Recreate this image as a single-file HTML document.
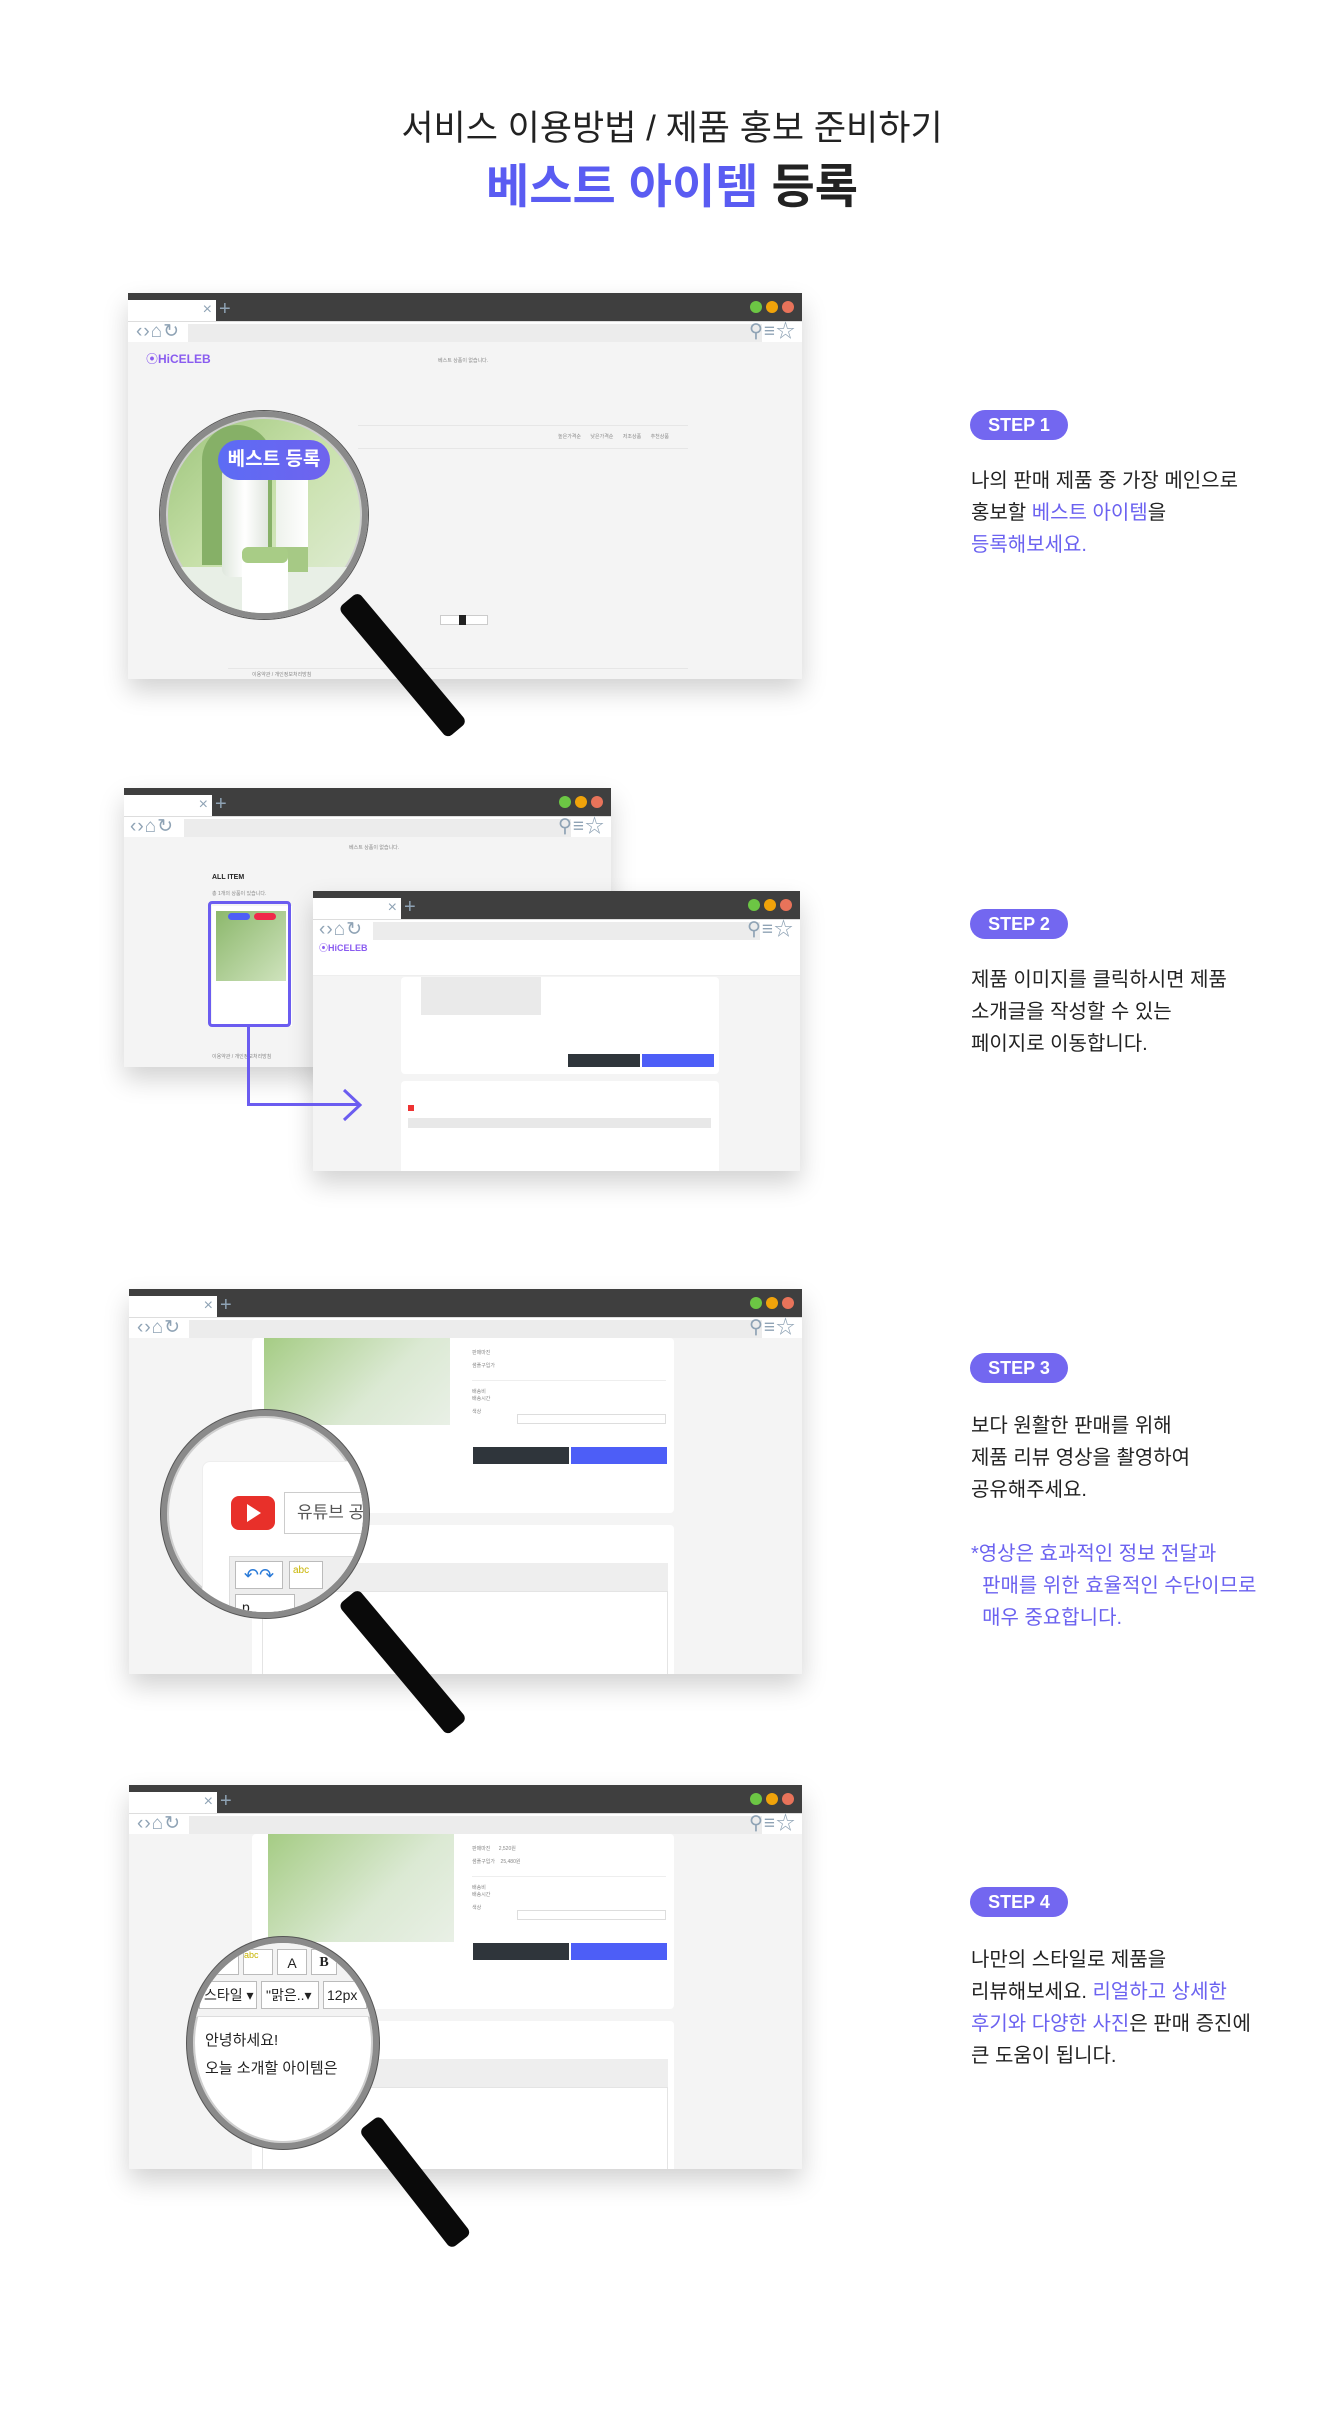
<!DOCTYPE html>
<html><head><meta charset="utf-8"><style>
*{margin:0;padding:0;box-sizing:border-box}
body{width:1344px;height:2418px;background:#fff;position:relative;overflow:hidden;font-family:"Liberation Sans","Noto Sans CJK KR",sans-serif;color:#222}
.a{position:absolute}
.br{position:absolute;background:#f4f4f4;box-shadow:0 12px 24px rgba(0,0,0,.18);overflow:hidden}
.top{position:absolute;left:0;right:0;top:0;height:28px;background:#3f3f3f}
.tab{position:absolute;left:0;top:7px;width:88px;height:21px;background:#fff}
.tab i{position:absolute;right:4px;top:1px;font-style:normal;color:#8fa3b5;font-size:16px}
.plus{position:absolute;left:91px;top:6px;color:#8fa3b5;font-size:20px;line-height:20px}
.dots{position:absolute;right:8px;top:8px;display:flex;gap:4px}
.dots b{width:12px;height:12px;border-radius:50%}
.nav{position:absolute;left:0;right:0;top:28px;height:21px;background:#fff;border-top:1px solid #ddd}
.addr{position:absolute;left:60px;right:40px;top:2px;height:18px;background:#ececec}
.ic{position:absolute;top:-1px;color:#8fa3b5;font-size:19px;line-height:22px;letter-spacing:1px}
.step{position:absolute;left:970px;width:98px;height:30px;border-radius:15px;background:#7367f0;color:#fff;font-weight:bold;font-size:18px;text-align:center;line-height:30px}
.tx{position:absolute;left:971px;font-size:20px;line-height:32px;color:#222}
.p{color:#6b62f0}
.mag{position:absolute;border-radius:50%;border:6px solid #8a8a8a;box-shadow:0 0 0 2px #cfcfcf inset,0 0 0 1px #555;overflow:hidden}
.handle{position:absolute;background:#0a0a0a;border-radius:6px;transform-origin:top center}
.sm{font-size:5px;color:#888}
.panel{position:absolute;background:#fff;border-radius:4px}
.btnd{position:absolute;background:#2f353b;color:#fff;font-size:6px;text-align:center}
.btnb{position:absolute;background:#4d5ef7;color:#fff;font-size:6px;text-align:center}
</style></head><body>

<div class="a" style="left:0;width:1344px;top:100px;text-align:center;font-size:35px;color:#222">서비스 이용방법 / 제품 홍보 준비하기</div>
<div class="a" style="left:0;width:1344px;top:148px;text-align:center;font-size:47px;font-weight:bold;color:#222"><span style="color:#5a5cf2">베스트 아이템</span> 등록</div>

<!-- STEP1 browser -->
<div class="br" style="left:128px;top:293px;width:674px;height:386px">
 <div class="top"><div class="tab"><i>×</i></div><div class="plus">+</div><div class="dots"><b style="background:#6cc644"></b><b style="background:#f0a30a"></b><b style="background:#e8735a"></b></div></div>
 <div class="nav"><div class="ic" style="left:8px">‹›⌂↻</div><div class="addr"></div><div class="ic" style="right:6px">⚲≡☆</div></div>
 <div class="a" style="left:18px;top:57px;font-size:12px;font-weight:bold;color:#8a5cf0">⦿HiCELEB</div>
 <div class="a sm" style="left:310px;top:64px">베스트 상품이 없습니다.</div>
 <div class="a" style="left:230px;top:132px;width:330px;height:1px;background:#e6e6e6"></div>
 <div class="a sm" style="left:430px;top:140px;word-spacing:8px">높은가격순 낮은가격순 저조상품 추천상품</div>
 <div class="a" style="left:230px;top:155px;width:330px;height:1px;background:#e6e6e6"></div>
 <div class="a" style="left:312px;top:322px;width:48px;height:10px;border:1px solid #ccc;background:#fff"></div>
 <div class="a" style="left:331px;top:322px;width:7px;height:10px;background:#222"></div>
 <div class="a" style="left:100px;top:375px;width:460px;height:1px;background:#e6e6e6"></div>
 <div class="a sm" style="left:124px;top:378px">이용약관 / 개인정보처리방침</div>
</div>
<div class="handle" style="left:335px;top:600px;width:26px;height:170px;transform:rotate(-40deg)"></div>
<div class="mag" style="left:160px;top:411px;width:208px;height:208px;background:linear-gradient(135deg,#9cc47a,#c7e0a9 45%,#e4eedc)">
 <div class="a" style="left:36px;top:8px;width:70px;height:140px;background:#86b067;border-radius:35px 35px 0 0"></div>
 <div class="a" style="left:0;top:150px;width:208px;height:60px;background:#e8efe6"></div>
 <div class="a" style="left:56px;top:50px;width:46px;height:110px;background:linear-gradient(90deg,#dfe7dd,#fff,#e0e6de);border-radius:8px"></div>
 <div class="a" style="left:110px;top:55px;width:32px;height:100px;background:linear-gradient(90deg,#eef2ec,#fff);border-radius:4px"></div>
 <div class="a" style="left:110px;top:130px;width:32px;height:25px;background:#a6c985"></div>
 <div class="a" style="left:76px;top:138px;width:46px;height:60px;background:#fff;border-radius:4px"></div>
 <div class="a" style="left:76px;top:130px;width:46px;height:16px;background:#a8cc86;border-radius:6px"></div>
 <div class="a" style="left:52px;top:23px;width:112px;height:40px;border-radius:20px;background:linear-gradient(90deg,#5c6cf5,#6f63ee);color:#fff;font-weight:bold;font-size:19px;text-align:center;line-height:40px">베스트 등록</div>
</div>
<div class="step" style="top:410px">STEP 1</div>
<div class="tx" style="top:465px">나의 판매 제품 중 가장 메인으로<br>홍보할 <span class="p">베스트 아이템</span>을<br><span class="p">등록해보세요.</span></div>

<!-- STEP2 -->
<div class="br" style="left:124px;top:788px;width:487px;height:279px">
 <div class="top"><div class="tab"><i>×</i></div><div class="plus">+</div><div class="dots"><b style="background:#6cc644"></b><b style="background:#f0a30a"></b><b style="background:#e8735a"></b></div></div>
 <div class="nav"><div class="ic" style="left:6px">‹›⌂↻</div><div class="addr"></div><div class="ic" style="right:6px">⚲≡☆</div></div>
 <div class="a sm" style="left:225px;top:56px">베스트 상품이 없습니다.</div>
 <div class="a" style="left:88px;top:86px;font-size:7px;font-weight:bold">ALL ITEM</div>
 <div class="a sm" style="left:88px;top:102px">총 1개의 상품이 있습니다.</div>
 <div class="a" style="left:88px;top:118px;width:80px;height:120px;background:#fff"></div>
 <div class="a" style="left:92px;top:123px;width:70px;height:70px;background:linear-gradient(135deg,#8cb86c,#cfe3bd)"></div>
 <div class="a" style="left:104px;top:125px;width:22px;height:7px;border-radius:4px;background:#4d5ef7"></div>
 <div class="a" style="left:130px;top:125px;width:22px;height:7px;border-radius:4px;background:#f0284a"></div>
 <div class="a sm" style="left:88px;top:265px">이용약관 / 개인정보처리방침</div>
</div>

<div class="br" style="left:313px;top:891px;width:487px;height:280px">
 <div class="top"><div class="tab"><i>×</i></div><div class="plus">+</div><div class="dots"><b style="background:#6cc644"></b><b style="background:#f0a30a"></b><b style="background:#e8735a"></b></div></div>
 <div class="nav"><div class="ic" style="left:6px">‹›⌂↻</div><div class="addr"></div><div class="ic" style="right:6px">⚲≡☆</div></div>
 <div class="a" style="left:0;right:0;top:49px;height:36px;background:#fff;border-bottom:1px solid #eee"></div>
 <div class="a" style="left:6px;top:50px;font-size:9px;font-weight:bold;color:#8a5cf0">⦿HiCELEB</div>
 <div class="panel" style="left:88px;top:86px;width:318px;height:97px"></div>
 <div class="a" style="left:108px;top:86px;width:120px;height:38px;background:#eaeaea"></div>
 <div class="btnd" style="left:255px;top:163px;width:72px;height:13px"></div>
 <div class="btnb" style="left:329px;top:163px;width:72px;height:13px"></div>
 <div class="panel" style="left:88px;top:190px;width:318px;height:100px"></div>
 <div class="a" style="left:95px;top:214px;width:6px;height:6px;background:#e33"></div>
 <div class="a" style="left:95px;top:227px;width:303px;height:10px;background:#e8e8e8"></div>
</div>
<div class="a" style="left:208px;top:901px;width:83px;height:126px;border:3px solid #6b5cf0;border-radius:4px"></div>
<div class="a" style="left:247px;top:1027px;width:3px;height:79px;background:#6b5cf0"></div>
<div class="a" style="left:247px;top:1103px;width:112px;height:3px;background:#6b5cf0"></div>
<svg class="a" style="left:340px;top:1088px" width="24" height="34"><path d="M4 2 L20 17 L4 32" fill="none" stroke="#6b5cf0" stroke-width="3"/></svg>
<div class="step" style="top:909px">STEP 2</div>
<div class="tx" style="top:964px">제품 이미지를 클릭하시면 제품<br>소개글을 작성할 수 있는<br>페이지로 이동합니다.</div>

<!-- STEP3 -->
<div class="br" style="left:129px;top:1289px;width:673px;height:385px">
 <div class="top"><div class="tab"><i>×</i></div><div class="plus">+</div><div class="dots"><b style="background:#6cc644"></b><b style="background:#f0a30a"></b><b style="background:#e8735a"></b></div></div>
 <div class="nav"><div class="ic" style="left:8px">‹›⌂↻</div><div class="addr"></div><div class="ic" style="right:6px">⚲≡☆</div></div>
 <div class="panel" style="left:123px;top:49px;width:422px;height:175px"></div>
 <div class="a" style="left:135px;top:49px;width:186px;height:87px;background:linear-gradient(135deg,#a5cc84,#dbe9d3 60%,#e9f0e6)"></div>
 <div class="a sm" style="left:343px;top:60px">판매마진<br><br>샘플구입가</div>
 <div class="a" style="left:343px;top:91px;width:194px;height:1px;background:#eee"></div>
 <div class="a sm" style="left:343px;top:99px">배송비<br>배송시간<br><br>색상</div>
 <div class="a" style="left:388px;top:125px;width:149px;height:10px;border:1px solid #ddd;background:#fff"></div>
 <div class="btnd" style="left:344px;top:158px;width:96px;height:17px"></div>
 <div class="btnb" style="left:442px;top:158px;width:96px;height:17px"></div>
 <div class="panel" style="left:123px;top:236px;width:422px;height:160px"></div>
 <div class="a" style="left:133px;top:274px;width:406px;height:28px;background:#eee"></div>
 <div class="a" style="left:133px;top:302px;width:406px;height:100px;background:#fff;border:1px solid #e4e4e4"></div>
</div>
<div class="handle" style="left:335px;top:1597px;width:26px;height:170px;transform:rotate(-40deg)"></div>
<div class="mag" style="left:161px;top:1410px;width:208px;height:208px;background:#f5f5f5">
 <div class="a" style="left:35px;top:45px;width:200px;height:200px;background:#fff;border-radius:8px;border:1px solid #eee"></div>
 <div class="a" style="left:64px;top:80px;width:44px;height:34px;background:#e8302a;border-radius:8px"></div>
 <div class="a" style="left:80px;top:88px;width:0;height:0;border-left:14px solid #fff;border-top:9px solid transparent;border-bottom:9px solid transparent"></div>
 <div class="a" style="left:117px;top:76px;width:100px;height:42px;border:1px solid #ccc;background:#fff;font-size:17px;color:#555;line-height:40px;padding-left:12px">유튜브 공유</div>
 <div class="a" style="left:62px;top:140px;width:160px;height:80px;background:#eee;border:1px solid #ddd"></div>
 <div class="a" style="left:68px;top:145px;width:48px;height:28px;border:1px solid #bbb;background:#fff;color:#2a7ad8;font-size:18px;line-height:26px;text-align:center">↶↷</div>
 <div class="a" style="left:122px;top:145px;width:34px;height:28px;border:1px solid #bbb;background:#fff;font-size:10px;color:#c8b400;padding:3px">abc</div>
 <div class="a" style="left:68px;top:178px;width:60px;height:28px;border:1px solid #bbb;background:#fff;font-size:14px;padding:4px 6px">p</div>
</div>
<div class="step" style="top:1353px">STEP 3</div>
<div class="tx" style="top:1410px">보다 원활한 판매를 위해<br>제품 리뷰 영상을 촬영하여<br>공유해주세요.</div>
<div class="tx p" style="top:1538px">*영상은 효과적인 정보 전달과<br>&nbsp;&nbsp;판매를 위한 효율적인 수단이므로<br>&nbsp;&nbsp;매우 중요합니다.</div>

<!-- STEP4 -->
<div class="br" style="left:129px;top:1785px;width:673px;height:384px">
 <div class="top"><div class="tab"><i>×</i></div><div class="plus">+</div><div class="dots"><b style="background:#6cc644"></b><b style="background:#f0a30a"></b><b style="background:#e8735a"></b></div></div>
 <div class="nav"><div class="ic" style="left:8px">‹›⌂↻</div><div class="addr"></div><div class="ic" style="right:6px">⚲≡☆</div></div>
 <div class="panel" style="left:123px;top:49px;width:422px;height:175px"></div>
 <div class="a" style="left:139px;top:49px;width:186px;height:108px;background:linear-gradient(135deg,#a5cc84,#dbe9d3 60%,#e9f0e6)"></div>
 <div class="a sm" style="left:343px;top:60px">판매마진 &nbsp;&nbsp;&nbsp;&nbsp; 2,520원<br><br>샘플구입가 &nbsp;&nbsp; 25,480원</div>
 <div class="a" style="left:343px;top:91px;width:194px;height:1px;background:#eee"></div>
 <div class="a sm" style="left:343px;top:99px">배송비<br>배송시간<br><br>색상</div>
 <div class="a" style="left:388px;top:125px;width:149px;height:10px;border:1px solid #ddd;background:#fff"></div>
 <div class="btnd" style="left:344px;top:158px;width:96px;height:17px"></div>
 <div class="btnb" style="left:442px;top:158px;width:96px;height:17px"></div>
 <div class="panel" style="left:123px;top:236px;width:422px;height:160px"></div>
 <div class="a" style="left:133px;top:274px;width:406px;height:28px;background:#eee"></div>
 <div class="a" style="left:133px;top:302px;width:406px;height:100px;background:#fff;border:1px solid #e4e4e4"></div>
</div>
<div class="handle" style="left:356px;top:2123px;width:26px;height:150px;transform:rotate(-38deg)"></div>
<div class="mag" style="left:187px;top:1937px;width:192px;height:212px;background:#fff">
 <div class="a" style="left:0;top:0;width:192px;height:74px;background:#f3f3f3;border-bottom:1px solid #ddd"></div>
 <div class="a" style="left:10px;top:6px;width:36px;height:26px;border:1px solid #bbb;background:#fff;color:#2a7ad8;font-size:16px">↶↷</div>
 <div class="a" style="left:50px;top:6px;width:30px;height:26px;border:1px solid #bbb;background:#fff;font-size:9px;color:#c8b400">abc</div>
 <div class="a" style="left:84px;top:6px;width:30px;height:26px;border:1px solid #bbb;background:#fff;font-size:14px;text-align:center;line-height:26px">A</div>
 <div class="a" style="left:118px;top:6px;width:26px;height:26px;border:1px solid #bbb;background:#fff;font-size:14px;font-weight:bold;font-family:'Liberation Serif',serif;text-align:center;line-height:26px">B</div>
 <div class="a" style="left:6px;top:38px;width:58px;height:28px;border:1px solid #bbb;background:#fff;font-size:14px;line-height:26px;padding-left:4px">스타일 ▾</div>
 <div class="a" style="left:68px;top:38px;width:58px;height:28px;border:1px solid #bbb;background:#fff;font-size:14px;line-height:26px;padding-left:4px">"맑은..▾</div>
 <div class="a" style="left:130px;top:38px;width:44px;height:28px;border:1px solid #bbb;background:#fff;font-size:14px;line-height:26px;padding-left:3px">12px</div>
 <div class="a" style="left:12px;top:84px;font-size:15px;line-height:28px;color:#222">안녕하세요!<br>오늘 소개할 아이템은</div>
</div>
<div class="step" style="top:1887px">STEP 4</div>
<div class="tx" style="top:1944px">나만의 스타일로 제품을<br>리뷰해보세요. <span class="p">리얼하고 상세한</span><br><span class="p">후기와 다양한 사진</span>은 판매 증진에<br>큰 도움이 됩니다.</div>

</body></html>
